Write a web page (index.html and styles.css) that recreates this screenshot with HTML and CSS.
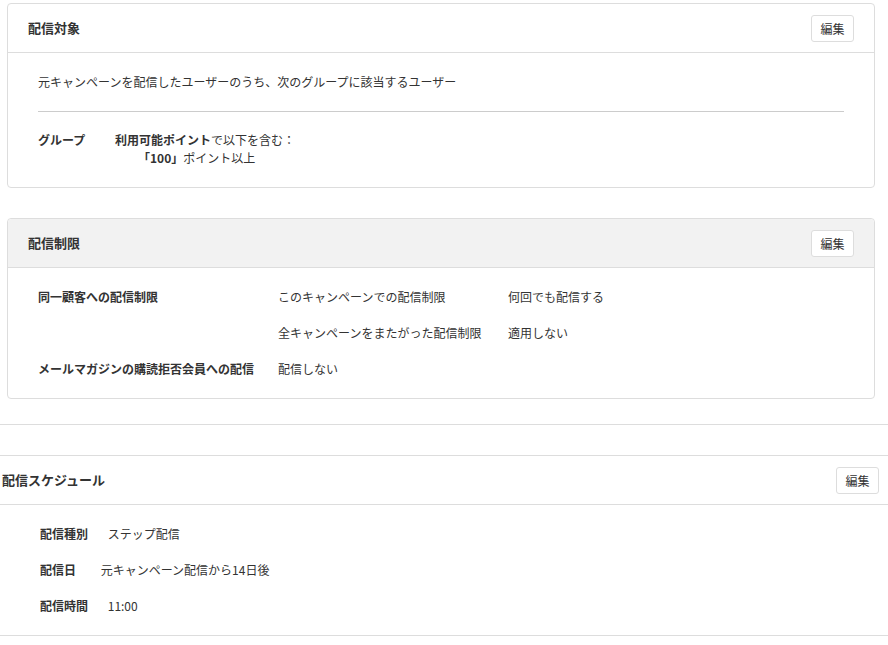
FILE: index.html
```html
<!DOCTYPE html>
<html lang="ja">
<head>
    <meta charset="UTF-8">
    <meta name="viewport" content="width=device-width, initial-scale=1.0">
    <title>配信設定</title>
    <link rel="stylesheet" href="styles.css">
</head>
<body>
    <div class="cards">
        <section class="card">
            <div class="card-header">
                <h2>配信対象</h2>
                <button class="edit-btn">編集</button>
            </div>
            <div class="card-body">
                <p class="target-text">元キャンペーンを配信したユーザーのうち、次のグループに該当するユーザー</p>
                <hr class="divider">
                <div class="group-row">
                    <span class="label">グループ</span>
                    <div class="group-value">
                        <div><b>利用可能ポイント</b>で以下を含む：</div>
                        <div class="indent"><b>「100」</b>ポイント以上</div>
                    </div>
                </div>
            </div>
        </section>

        <section class="card">
            <div class="card-header gray">
                <h2>配信制限</h2>
                <button class="edit-btn">編集</button>
            </div>
            <div class="card-body limits">
                <span class="label">同一顧客への配信制限</span>
                <span>このキャンペーンでの配信制限</span>
                <span>何回でも配信する</span>
                <span></span>
                <span>全キャンペーンをまたがった配信制限</span>
                <span>適用しない</span>
                <span class="label">メールマガジンの購読拒否会員への配信</span>
                <span>配信しない</span>
                <span></span>
            </div>
        </section>
    </div>

    <div class="spacer"></div>

    <section class="schedule">
        <div class="schedule-header">
            <h2>配信スケジュール</h2>
            <button class="edit-btn">編集</button>
        </div>
        <div class="schedule-body">
            <div class="sched-row">
                <span class="label">配信種別</span>
                <span class="value">ステップ配信</span>
            </div>
            <div class="sched-row">
                <span class="label">配信日</span>
                <span class="value wide">元キャンペーン配信から14日後</span>
            </div>
            <div class="sched-row">
                <span class="label">配信時間</span>
                <span class="value">11:00</span>
            </div>
        </div>
    </section>
</body>
</html>
```

FILE: styles.css
```css
body {
    font-family: "Noto Sans CJK JP", "Noto Sans", sans-serif;
    font-size: 12px;
    line-height: 18px;
    color: #333;
    background-color: #fff;
    margin: 0;
    padding: 3px 0 0;
}
h2 {
    margin: 0;
    font-size: 13px;
    font-weight: bold;
    color: #333;
}
p {
    margin: 0;
}
b {
    font-weight: bold;
}
.cards {
    padding: 0 13px 0 7px;
    display: flex;
    flex-direction: column;
    gap: 30px;
}
.card {
    border: 1px solid #ddd;
    border-radius: 4px;
    background: #fff;
}
.card-header {
    display: flex;
    justify-content: space-between;
    align-items: center;
    height: 48px;
    padding: 0 20px;
    border-bottom: 1px solid #ddd;
    box-sizing: content-box;
}
.card-header.gray {
    background-color: #f2f2f2;
    border-radius: 4px 4px 0 0;
}
.edit-btn {
    font-family: inherit;
    font-size: 12px;
    color: #333;
    background: #fff;
    border: 1px solid #ddd;
    border-radius: 3px;
    width: 43px;
    height: 27px;
    padding: 0;
    cursor: pointer;
}
.card-body {
    padding: 20px 30px;
}
.divider {
    border: none;
    border-top: 1px solid #ccc;
    margin: 20px 0 19px;
}
.group-row {
    display: flex;
}
.group-row .label {
    width: 77px;
}
.label {
    font-weight: bold;
}
.indent {
    padding-left: 23px;
}
.limits {
    display: grid;
    grid-template-columns: 240px 230px 1fr;
    row-gap: 18px;
}
.spacer {
    height: 25px;
    border-bottom: 1px solid #ddd;
    margin-top: 0;
    margin-bottom: 30px;
}
.schedule {
    border-top: 1px solid #ddd;
    border-bottom: 1px solid #ddd;
}
.schedule-header {
    display: flex;
    justify-content: space-between;
    align-items: center;
    height: 48px;
    padding: 0 9px 0 2px;
    border-bottom: 1px solid #ddd;
}
.schedule-body {
    padding: 20px 40px 20px;
    display: flex;
    flex-direction: column;
    gap: 18px;
}
.sched-row .value {
    margin-left: 17px;
}
.sched-row .value.wide {
    margin-left: 22px;
}
```
